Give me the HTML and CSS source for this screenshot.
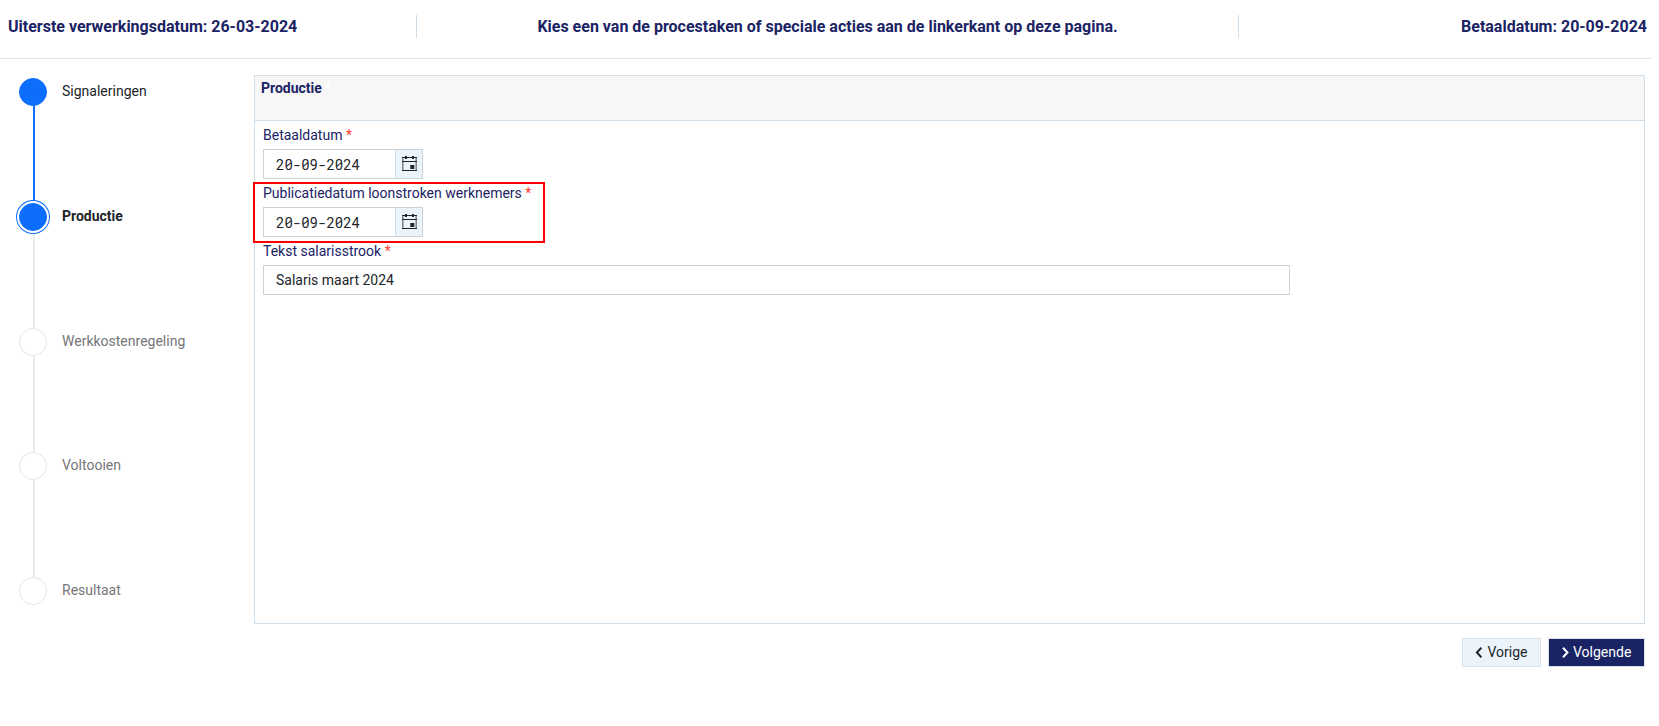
FILE: index.html
```
<!DOCTYPE html>
<html lang="nl">
<head>
<meta charset="utf-8">
<title>Productie</title>
<link rel="stylesheet" href="styles.css">
</head>
<body>
<svg class="defs" width="0" height="0">
  <symbol id="calendar" viewBox="0 0 16 16">
    <path d="M.8 1v14M14.2 1v14" fill="none" stroke="#85898e" stroke-width="1.6"/>
    <path d="M0 1.5h15M0 5.5h15M0 14.5h15" fill="none" stroke="#212529" stroke-width="1"/>
    <path d="M3 0h2v3H3zM10 0h2v3h-2zM8.3 9h4v4h-4z" fill="#212529"/>
  </symbol>
</svg>
<header class="topbar">
  <div class="topbar-start">Uiterste verwerkingsdatum: 26-03-2024</div>
  <div class="topbar-message">Kies een van de procestaken of speciale acties aan de linkerkant op deze pagina.</div>
  <div class="topbar-end">Betaaldatum: 20-09-2024</div>
</header>
<div class="layout">
  <ol class="steps">
    <li class="step done"><span class="track"><i class="dot"></i></span><span class="step-name">Signaleringen</span></li>
    <li class="step current"><span class="track"><i class="dot"></i></span><span class="step-name">Productie</span></li>
    <li class="step"><span class="track"><i class="dot"></i></span><span class="step-name">Werkkostenregeling</span></li>
    <li class="step"><span class="track"><i class="dot"></i></span><span class="step-name">Voltooien</span></li>
    <li class="step"><span class="track"><i class="dot"></i></span><span class="step-name">Resultaat</span></li>
  </ol>
  <main class="content">
    <section class="panel">
      <h1 class="panel-title">Productie <span class="mark">*</span></h1>
      <div class="form">
        <div class="field">
          <div class="label">Betaaldatum <span class="required">*</span></div>
          <div class="input date"><span class="value">20-09-2024</span><span class="picker"><svg width="16" height="16"><use href="#calendar"/></svg></span></div>
        </div>
        <div class="field">
          <div class="label">Publicatiedatum loonstroken werknemers <span class="required">*</span></div>
          <div class="input date"><span class="value">20-09-2024</span><span class="picker"><svg width="16" height="16"><use href="#calendar"/></svg></span></div>
          <div class="highlight"></div>
        </div>
        <div class="field">
          <div class="label">Tekst salarisstrook <span class="required">*</span></div>
          <div class="input text"><span class="value">Salaris maart 2024</span></div>
        </div>
      </div>
    </section>
    <div class="actions">
      <div class="button previous"><svg width="7" height="11" viewBox="0 0 7 11"><path d="M6.4 .8 1.9 5.5 6.4 10.2"/></svg><span>Vorige</span></div>
      <div class="button next"><svg width="7" height="11" viewBox="0 0 7 11"><path d="M1 .8 5.5 5.5 1 10.2"/></svg><span>Volgende</span></div>
    </div>
  </main>
</div>
</body>
</html>
```
FILE: styles.css
```
* { box-sizing: border-box; }
body {
  margin: 0;
  background: #fff;
  color: #212529;
  font: 14px/20px Roboto, sans-serif;
}
.defs { display: block; }
.topbar {
  display: grid;
  grid-template-columns: 409px 822px 1fr;
  width: 1651px;
  height: 59px;
  padding: 15px 4px 21px 8px;
  border-bottom: 1px solid #dee2e6;
  color: #1a2364;
  font-size: 16px;
  font-weight: 700;
  line-height: 23px;
}
.topbar-start, .topbar-message { border-right: 1px solid #d0deea; height: 23px; }
.topbar-message { text-align: center; }
.topbar-end { text-align: right; }
.layout { display: flex; }
.steps { width: 254px; margin: 0; padding: 19px 0 0 19px; list-style: none; }
.step { display: flex; height: 124.75px; color: #757679; }
.track { display: flex; flex-direction: column; align-items: center; width: 28px; }
.track::after {
  content: "";
  flex: 1;
  width: 2px;
  margin-left: 2px;
  background: #e9ecef;
}
.step:last-child .track::after { display: none; }
.dot {
  display: block;
  flex: none;
  width: 28px;
  height: 28px;
  border: 1px solid #e4e4e4;
  border-radius: 50%;
}
.step-name { padding: 3px 0 0 15px; }
.done .dot, .current .dot { background: #0d6efd; border-color: #0d6efd; }
.done .track::after { background: #0d6efd; }
.current .dot { box-shadow: 0 0 0 2px #fff, 0 0 0 3px #0d6efd; z-index: 1; }
.done, .current { color: #212529; }
.current { font-weight: 700; }
.content { width: 1391px; padding-top: 16px; }
.panel { height: 549px; border: 1px solid #d0deea; }
.panel-title {
  height: 45px;
  margin: 0;
  padding: 2px 6px;
  border-bottom: 1px solid #d0deea;
  background: #f7f7f7;
  color: #1a2364;
  font-size: 14px;
  font-weight: 700;
}
.mark { color: #fff; }
.form { padding: 0 8px; }
.field { position: relative; }
.label { height: 28px; padding-top: 4px; color: #1a2364; }
.required { color: #ff3b30; }
.input { display: flex; height: 30px; border: 1px solid #ced0d2; }
.value { flex: 1; padding: 4px 12px; }
.date { width: 160px; }
.date .value { padding-top: 5px; font-family: "Roboto Mono", "DejaVu Sans Mono", monospace; }
.text { width: 1027px; }
.picker { flex: none; width: 27px; padding: 6px 0 0 6px; border-left: 1px solid #d0deea; background: #ecf4fb; }
.picker svg { display: block; }
.highlight {
  position: absolute;
  left: -10px;
  top: 3px;
  width: 292px;
  height: 61px;
  border: 2px solid #f00;
}
.actions { display: flex; justify-content: flex-end; gap: 7px; padding-top: 14px; }
.button {
  display: flex;
  align-items: center;
  height: 29px;
  padding: 0 0 1px 12px;
  border: 1px solid #dbe1e8;
}
.button svg { flex: none; margin-right: 5.5px; }
.button path { fill: none; stroke: currentColor; stroke-width: 2; }
.previous { width: 79px; background: #ecf4fb; }
.next { width: 97px; background: #1a2364; color: #fff; }
.next svg { margin: 0 4.5px 0 .5px; }
```
